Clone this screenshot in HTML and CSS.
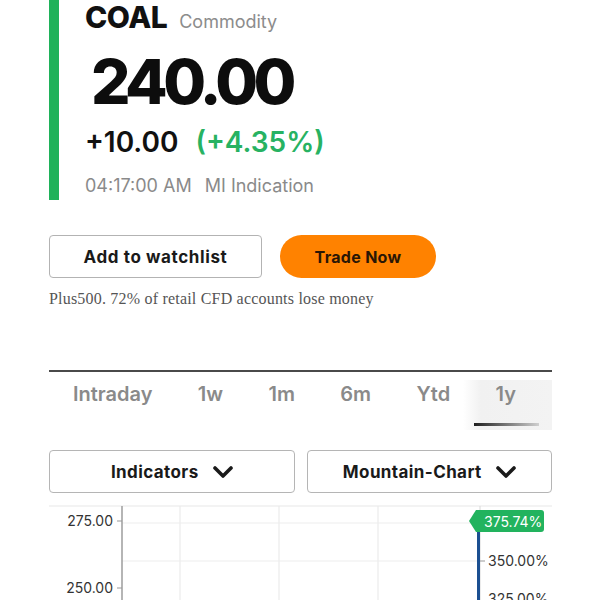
FILE: index.html
```html
<!DOCTYPE html>
<html>
<head>
<meta charset="utf-8">
<link rel="stylesheet" href="styles.css">
</head>
<body>
<div class="page">
  <section class="quote">
    <div class="bar"></div>
    <div class="info">
      <div class="title"><span class="sym">COAL</span><span class="type">Commodity</span></div>
      <div class="price">240.00</div>
      <div class="change"><span class="abs">+10.00</span><span class="pct">(+4.35%)</span></div>
      <div class="time"><span>04:17:00 AM</span><span>MI Indication</span></div>
    </div>
  </section>

  <div class="actions">
    <button class="btn watch">Add to watchlist</button>
    <button class="btn trade">Trade Now</button>
  </div>
  <p class="disclaimer">Plus500. 72% of retail CFD accounts lose money</p>

  <nav class="tabs">
    <div class="tab-list">
      <span class="tab">Intraday</span>
      <span class="tab">1w</span>
      <span class="tab">1m</span>
      <span class="tab">6m</span>
      <span class="tab">Ytd</span>
      <span class="tab active">1y</span>
    </div>
  </nav>

  <div class="selects">
    <button class="select">Indicators
      <svg class="chev" width="20" height="12" viewBox="0 0 20 12"><polyline points="2,2 10,10 18,2" fill="none" stroke="#1a1a1a" stroke-width="3.6" stroke-linecap="round" stroke-linejoin="round"/></svg>
    </button>
    <button class="select">Mountain-Chart
      <svg class="chev" width="20" height="12" viewBox="0 0 20 12"><polyline points="2,2 10,10 18,2" fill="none" stroke="#1a1a1a" stroke-width="3.6" stroke-linecap="round" stroke-linejoin="round"/></svg>
    </button>
  </div>

  <svg class="chart" width="504" height="100" viewBox="49 500 504 100">
    <line x1="49" y1="506" x2="552" y2="506" stroke="#e8e8e8" stroke-width="1.2"/>
    <line x1="180" y1="506" x2="180" y2="600" stroke="#ebebeb" stroke-width="1.2"/>
    <line x1="279" y1="506" x2="279" y2="600" stroke="#ebebeb" stroke-width="1.2"/>
    <line x1="378" y1="506" x2="378" y2="600" stroke="#ebebeb" stroke-width="1.2"/>
    <line x1="480" y1="506" x2="480" y2="600" stroke="#dedede" stroke-width="1.2"/>
    <line x1="122" y1="523" x2="480" y2="523" stroke="#ededed" stroke-width="1.2"/>
    <line x1="122" y1="561" x2="480" y2="561" stroke="#ededed" stroke-width="1.2"/>
    <line x1="122" y1="506" x2="122" y2="600" stroke="#a3a3a3" stroke-width="1.6"/>
    <line x1="117" y1="521" x2="122" y2="521" stroke="#999" stroke-width="1"/>
    <line x1="117" y1="588" x2="122" y2="588" stroke="#999" stroke-width="1"/>
    <text x="113" y="526" text-anchor="end" class="axis">275.00</text>
    <text x="113" y="593" text-anchor="end" class="axis">250.00</text>
    <line x1="478.5" y1="522" x2="478.5" y2="600" stroke="#1b4f91" stroke-width="3"/>
    <line x1="480" y1="561" x2="485" y2="561" stroke="#999" stroke-width="1"/>
    <text x="488" y="566" class="axis">350.00%</text>
    <text x="488" y="604" class="axis">325.00%</text>
    <path d="M469 521 L476 510 H541 Q544 510 544 513 V529 Q544 532 541 532 H476 Z" fill="#22b35e"/>
    <text x="484" y="526.5" class="tag">375.74%</text>
  </svg>
</div>
</body>
</html>
```

FILE: styles.css
```css
* { box-sizing: border-box; }
html, body { margin: 0; padding: 0; background: #fff; }
body {
  font-family: Inter, "Open Sans", Arial, sans-serif;
  color: #111;
  width: 600px;
  height: 600px;
  overflow: hidden;
}
.page {
  padding-left: 49px;
  width: 552px;
}

/* Quote header */
.quote {
  display: flex;
  height: 200px;
}
.bar {
  width: 10px;
  background: #1fb25a;
  flex: none;
}
.info {
  padding-left: 26px;
}
.title {
  line-height: 34px;
  white-space: nowrap;
}
.sym {
  font-size: 30px;
  font-weight: 800;
  letter-spacing: -0.5px;
  color: #111;
}
.type {
  font-size: 18px;
  color: #8c8c8c;
  margin-left: 12px;
}
.price {
  margin-top: 12px;
  font-size: 62px;
  line-height: 62px;
  font-weight: 800;
  letter-spacing: -4.5px;
  margin-left: 6px;
  color: #0d0d0d;
}
.change {
  margin-top: 13px;
  font-size: 28px;
  line-height: 32px;
  font-weight: 600;
  display: flex;
  gap: 17px;
}
.abs { color: #111; }
.pct { color: #27b262; }
.time {
  margin-top: 16px;
  font-size: 18px;
  line-height: 24px;
  color: #8a8a8a;
  display: flex;
  gap: 13px;
}

/* Actions */
.actions {
  display: flex;
  gap: 18px;
  margin-top: 35px;
}
.btn {
  height: 43px;
  font-family: inherit;
  font-weight: 700;
  cursor: pointer;
}
.watch {
  width: 213px;
  background: #fff;
  border: 1px solid #b3b3b3;
  border-radius: 4px;
  font-size: 17px;
  letter-spacing: 0.6px;
  color: #1a1a1a;
}
.trade {
  width: 156px;
  background: #ff8200;
  border: none;
  border-radius: 22px;
  font-size: 16px;
  letter-spacing: 0.3px;
  color: #2a1605;
}
.disclaimer {
  margin: 11px 0 0;
  font-family: "Liberation Serif", "Times New Roman", serif;
  font-size: 16px;
  line-height: 20px;
  letter-spacing: 0.2px;
  color: #555;
}

/* Tabs */
.tabs {
  margin-top: 61px;
  width: 503px;
  border-top: 2px solid #4a4a4a;
}
.tab-list {
  margin-top: 8px;
  height: 50px;
  display: flex;
  background: linear-gradient(to right, rgba(241,241,241,0) 414px, #f1f1f1 432px, #f3f3f3 100%);
}
.tab {
  padding: 2px 22.7px 0;
  font-size: 20px;
  line-height: 24px;
  font-weight: 600;
  color: #8a8a8a;
}
.tab:first-child { padding-left: 24px; }
.tab.active::after {
  content: "";
  display: block;
  margin: 17px -22.7px 0 -21.7px;
  height: 3px;
  background: linear-gradient(to right, #1e1e1e, #d0d0d0);
}

/* Selects */
.selects {
  display: flex;
  gap: 12px;
  margin-top: 20px;
  width: 503px;
}
.select {
  flex: 1;
  height: 43px;
  background: #fff;
  border: 1px solid #b5b5b5;
  border-radius: 4px;
  font-family: inherit;
  font-size: 17px;
  font-weight: 700;
  letter-spacing: 0.4px;
  color: #1a1a1a;
  display: flex;
  align-items: center;
  justify-content: center;
  gap: 14px;
}
.chev { display: block; }

/* Chart */
.chart {
  display: block;
  margin-top: 7px;
  overflow: visible;
}
.axis {
  font-family: Inter, "Open Sans", sans-serif;
  font-size: 14px;
  fill: #333;
}
.tag {
  font-family: Inter, "Open Sans", sans-serif;
  font-size: 14px;
  fill: #fff;
}
```
